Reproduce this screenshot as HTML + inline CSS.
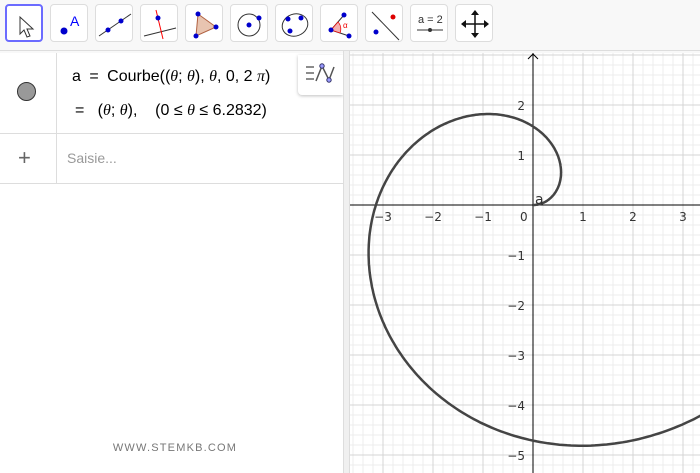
<!DOCTYPE html>
<html><head><meta charset="utf-8"><style>
body{margin:0;width:700px;height:473px;overflow:hidden;background:#f8f8f8;font-family:"Liberation Sans","DejaVu Sans",sans-serif;position:relative}
.tb{position:absolute;left:0;top:0;width:700px;height:50px;background:#f8f8f8;border-bottom:1px solid #ddd}
.btn{position:absolute;top:4px;width:38px;height:38px;background:#fff;border:1px solid #ddd;border-radius:4px;box-sizing:border-box}
.btn svg{position:absolute;left:0;top:0}
.alg{position:absolute;left:0;top:53px;width:343px;height:420px;background:#fff}
.div{position:absolute;left:343px;top:51px;width:7px;height:422px;background:#f0f0f0;border-left:1px solid #ddd;border-right:1px solid #ddd;box-sizing:border-box}
.gr{position:absolute;left:350px;top:53px;width:350px;height:420px;background:#fff;overflow:hidden}
i{font-family:'Liberation Serif',serif}
</style></head><body>
<div class="tb">
<div class="btn" style="left:5px;border:2px solid #6b6bff"><svg width="38" height="38"><path d="M13 11 L13 28 L17 24 L20 31 L23 30 L20 23 L26 23 Z" fill="#fff" stroke="#333" stroke-width="1"/></svg></div>
<div class="btn" style="left:50px"><svg width="38" height="38"><circle cx="13" cy="26" r="3.5" fill="#00c"/><text x="19" y="21" fill="#00f" font-size="14" font-family="Liberation Sans">A</text></svg></div>
<div class="btn" style="left:95px"><svg width="38" height="38"><line x1="3" y1="31" x2="35" y2="9" stroke="#333"/><circle cx="12" cy="25" r="2.5" fill="#00c"/><circle cx="25" cy="16" r="2.5" fill="#00c"/></svg></div>
<div class="btn" style="left:140px"><svg width="38" height="38"><line x1="3" y1="31" x2="35" y2="23" stroke="#333"/><line x1="15" y1="5" x2="22" y2="34" stroke="#f00"/><circle cx="17" cy="13" r="2.5" fill="#00c"/></svg></div>
<div class="btn" style="left:185px"><svg width="38" height="38"><path d="M12 9 L30 22 L10 31 Z" fill="#e8c4b0" stroke="#b06040"/><circle cx="12" cy="9" r="2.5" fill="#00c"/><circle cx="30" cy="22" r="2.5" fill="#00c"/><circle cx="10" cy="31" r="2.5" fill="#00c"/></svg></div>
<div class="btn" style="left:230px"><svg width="38" height="38"><circle cx="18" cy="20" r="11" fill="none" stroke="#333"/><circle cx="18" cy="20" r="2.5" fill="#00c"/><circle cx="28" cy="13" r="2.5" fill="#00c"/></svg></div>
<div class="btn" style="left:275px"><svg width="38" height="38"><ellipse cx="19" cy="20" rx="13" ry="11" fill="none" stroke="#333" transform="rotate(-20 19 20)"/><circle cx="12" cy="14" r="2.5" fill="#00c"/><circle cx="25" cy="13" r="2.5" fill="#00c"/><circle cx="14" cy="26" r="2.5" fill="#00c"/></svg></div>
<div class="btn" style="left:320px"><svg width="38" height="38"><path d="M10 25 L23 10 M10 25 L28 31" stroke="#333" fill="none"/><path d="M10 25 L17 17 A10 10 0 0 1 19 28 Z" fill="#f4b0b0" stroke="#e00" stroke-width=".7"/><text x="22" y="23" fill="#e00" font-size="8">α</text><circle cx="10" cy="25" r="2.5" fill="#00c"/><circle cx="23" cy="10" r="2.5" fill="#00c"/><circle cx="28" cy="31" r="2.5" fill="#00c"/></svg></div>
<div class="btn" style="left:365px"><svg width="38" height="38"><line x1="6" y1="7" x2="33" y2="35" stroke="#333"/><circle cx="27" cy="12" r="2.5" fill="#d00"/><circle cx="10" cy="27" r="2.5" fill="#00c"/></svg></div>
<div class="btn" style="left:410px"><svg width="38" height="38"><text x="7" y="18" font-size="11" fill="#333">a = 2</text><line x1="6" y1="25" x2="32" y2="25" stroke="#333"/><circle cx="19" cy="25" r="2" fill="#333"/></svg></div>
<div class="btn" style="left:455px"><svg width="38" height="38"><path d="M19 6 V32 M6 19 H32" stroke="#111" stroke-width="1.5"/><path d="M19 5 l-4 5 h8 Z M19 33 l-4 -5 h8 Z M5 19 l5 -4 v8 Z M33 19 l-5 -4 v8 Z" fill="#111"/></svg></div>
</div>
<div class="alg">
<div style="position:absolute;left:0;top:80px;width:343px;height:1px;background:#ddd"></div>
<div style="position:absolute;left:0;top:130px;width:343px;height:1px;background:#ddd"></div>
<div style="position:absolute;left:56px;top:0;width:1px;height:130px;background:#ddd"></div>
<div style="position:absolute;left:17px;top:29px;width:19px;height:19px;border-radius:50%;background:#999;border:1px solid #333;box-sizing:border-box"></div>
<div style="position:absolute;left:72px;top:15px;font-size:16px;color:#000;white-space:nowrap">a <span style="margin:0 4px">=</span> Courbe((<i>θ</i>; <i>θ</i>), <i>θ</i>, 0, 2 <i>π</i>)</div>
<div style="position:absolute;left:75px;top:49px;font-size:16px;color:#000;white-space:nowrap">= &nbsp;&nbsp;(<i>θ</i>; <i>θ</i>), &nbsp;&nbsp;&nbsp;(0 ≤ <i>θ</i> ≤ 6.2832)</div>
<div style="position:absolute;left:298px;top:2px;width:45px;height:40px;background:#fff;box-shadow:0 1px 3px rgba(0,0,0,.25);border-radius:0 0 0 4px"><svg width="45" height="40"><path d="M8 12h8M8 18h8M8 24h8" stroke="#666" stroke-width="1.5"/><path d="M18 26 L24 11 L31 25 L36 12" stroke="#555" fill="none" stroke-width="1.5"/><circle cx="24" cy="11" r="2.2" fill="#99f" stroke="#336"/><circle cx="31" cy="25" r="2.2" fill="#99f" stroke="#336"/></svg></div>
<div style="position:absolute;left:18px;top:92px;font-size:22px;color:#666">+</div>
<div style="position:absolute;left:67px;top:97px;font-size:14px;color:#999">Saisie...</div>
<div style="position:absolute;left:0;width:350px;top:389px;text-align:center;font-size:11px;letter-spacing:1.2px;color:#777">WWW.STEMKB.COM</div>
</div>
<div class="div"></div>
<div class="gr"><svg id="g" width="350" height="420" font-family="DejaVu Sans,Liberation Sans" font-size="12" fill="#333"></svg></div>
<script>
var g=document.getElementById('g'),s='';
var ox=183,oy=152;
for(var x=ox%10;x<350;x+=10){if((x-ox)%50!==0)s+='<line x1="'+x+'" y1="0" x2="'+x+'" y2="420" stroke="#ececec"/>';}
for(var y=oy%10;y<420;y+=10){if((y-oy)%50!==0)s+='<line x1="0" y1="'+y+'" x2="350" y2="'+y+'" stroke="#ececec"/>';}
for(var x=ox%50;x<350;x+=50)s+='<line x1="'+x+'" y1="0" x2="'+x+'" y2="420" stroke="#d4d4d4"/>';
for(var y=oy%50;y<420;y+=50)s+='<line x1="0" y1="'+y+'" x2="350" y2="'+y+'" stroke="#d4d4d4"/>';
s+='<line x1="0" y1="'+oy+'" x2="350" y2="'+oy+'" stroke="#000"/><line x1="'+ox+'" y1="0" x2="'+ox+'" y2="420" stroke="#000"/>';
s+='<path d="M'+(ox-5)+' 6 L'+ox+' 1 L'+(ox+5)+' 6" fill="none" stroke="#000"/>';
for(var i=-3;i<=3;i++){if(i===0)continue;s+='<text x="'+(ox+i*50)+'" y="'+(oy+16)+'" text-anchor="middle">'+(i<0?'\u2212'+(-i):i)+'</text>';}
s+='<text x="'+(ox-13)+'" y="'+(oy+16)+'">0</text>';
for(var j=-5;j<=2;j++){if(j===0)continue;s+='<text x="'+(ox-8)+'" y="'+(oy-j*50+5)+'" text-anchor="end">'+(j<0?'\u2212'+(-j):j)+'</text>';}
var p='';for(var k=0;k<=400;k++){var t=k/400*2*Math.PI;var px=ox+50*t*Math.cos(t),py=oy-50*t*Math.sin(t);p+=(k?'L':'M')+px.toFixed(1)+' '+py.toFixed(1);}
s+='<path d="'+p+'" fill="none" stroke="#444" stroke-width="2.5"/>';
s+='<text x="'+(ox+2)+'" y="'+(oy-1)+'" font-size="14" fill="#333">a</text>';
g.innerHTML=s;
</script>
</body></html>
